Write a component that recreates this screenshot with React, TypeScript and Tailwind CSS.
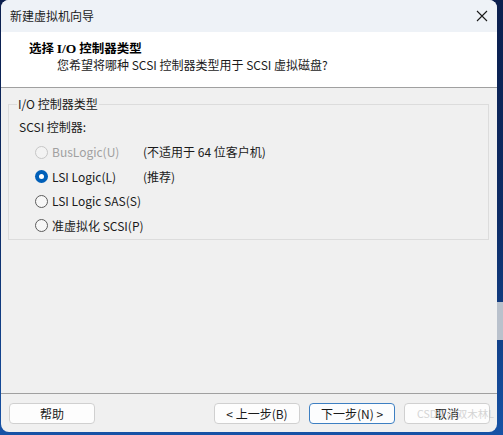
import React from "react";

const font = { fontFamily: '"Noto Sans CJK SC", "Noto Sans", sans-serif' };

function Radio({ checked, disabled }: { checked?: boolean; disabled?: boolean }) {
  if (checked) {
    return (
      <span className="flex h-[13px] w-[13px] shrink-0 items-center justify-center rounded-full bg-[#005fb8]">
        <span className="h-[5px] w-[5px] rounded-full bg-white" />
      </span>
    );
  }
  return (
    <span
      className={
        "h-[13px] w-[13px] shrink-0 rounded-full border " +
        (disabled ? "border-[#c6c6c6] bg-[#f3f3f3]" : "border-[#5c5c5c] bg-[#f7f7f7]")
      }
    />
  );
}

function Row({
  label,
  note,
  checked,
  disabled,
}: {
  label: string;
  note?: string;
  checked?: boolean;
  disabled?: boolean;
}) {
  return (
    <div className="flex h-[24.5px] items-center whitespace-nowrap pl-[26px]">
      <div className="flex w-[108px] shrink-0 items-center gap-[4px]">
        <Radio checked={checked} disabled={disabled} />
        <span className={disabled ? "text-[#a0a0a0]" : "text-[#1a1a1a]"}>{label}</span>
      </div>
      {note && <span className="text-[#1a1a1a]">{note}</span>}
    </div>
  );
}

function Btn({ children, primary }: { children: React.ReactNode; primary?: boolean }) {
  return (
    <div
      className={
        "flex h-[21px] w-[86px] items-center justify-center rounded-[4px] border text-[12px] text-[#1a1a1a] " +
        (primary ? "border-[#3d7fc2] bg-[#fcfdfe]" : "border-[#d0d0d0] bg-[#fdfdfd]")
      }
    >
      {children}
    </div>
  );
}

export default function App() {
  return (
    <div
      className="relative h-[435px] w-[503px] overflow-hidden bg-linear-to-b from-[#0b1f4e] via-[#0d2c66] to-[#1652a6]"
      style={font}
    >
      <div className="ml-[1px] flex h-[432px] w-[496px] flex-col overflow-hidden rounded-[8px] bg-[#f0f0f0] text-[12px] leading-[16px]">
        {/* Title bar */}
        <div className="flex h-[32px] shrink-0 items-center justify-between bg-[#eef2f7] pl-[9px] pr-[8px]">
          <span className="text-[12px] text-[#1a1a1a]">新建虚拟机向导</span>
          <svg width="12" height="12" viewBox="0 0 12 12" className="mr-[1px]">
            <path d="M1 1 L11 11 M11 1 L1 11" stroke="#1a1a1a" strokeWidth="1.1" fill="none" />
          </svg>
        </div>
        {/* Header */}
        <div className="h-[56px] shrink-0 border-b border-[#a0a0a0] bg-white pt-[8px]">
          <div className="whitespace-nowrap pl-[28px] text-[12.5px] font-bold text-black">
            选择 <span className="text-[13.5px]" style={{ fontFamily: '"Liberation Serif", serif' }}>I/O</span> 控制器类型
          </div>
          <div className="whitespace-nowrap pl-[56px] text-[#1a1a1a]">您希望将哪种 SCSI 控制器类型用于 SCSI 虚拟磁盘?</div>
        </div>
        {/* Body */}
        <div className="flex-1 px-[7px] pt-[8px]">
          <fieldset className="w-[481px] border border-[#dcdcdc] pb-[1px]">
            <legend className="ml-[8px] px-[1px] text-[#1a1a1a]">I/O 控制器类型</legend>
            <div className="pl-[10px] pt-[7px] text-[#1a1a1a]">SCSI 控制器:</div>
            <div className="mt-[5px]">
              <Row label="BusLogic(U)" note="(不适用于 64 位客户机)" disabled />
              <Row label="LSI Logic(L)" note="(推荐)" checked />
              <Row label="LSI Logic SAS(S)" />
              <Row label="准虚拟化 SCSI(P)" />
            </div>
          </fieldset>
        </div>
        {/* Footer */}
        <div className="flex h-[39px] shrink-0 items-start justify-between border-t border-[#a0a0a0] pl-[8px] pr-[7px] pt-[9px]">
          <Btn>帮助</Btn>
          <div className="flex gap-[9px]">
            <Btn>&lt; 上一步(B)</Btn>
            <Btn primary>下一步(N) &gt;</Btn>
            <Btn>取消</Btn>
          </div>
        </div>
      </div>
      <div className="absolute right-0 top-[302px] h-[38px] w-[6px] bg-[#b9c1cc]" />
      <div className="pointer-events-none absolute right-[9px] top-[408px] whitespace-nowrap text-[10.5px] leading-[12px] text-[#c4c4c4] opacity-70">
        CSDN @双木林L
      </div>
    </div>
  );
}
